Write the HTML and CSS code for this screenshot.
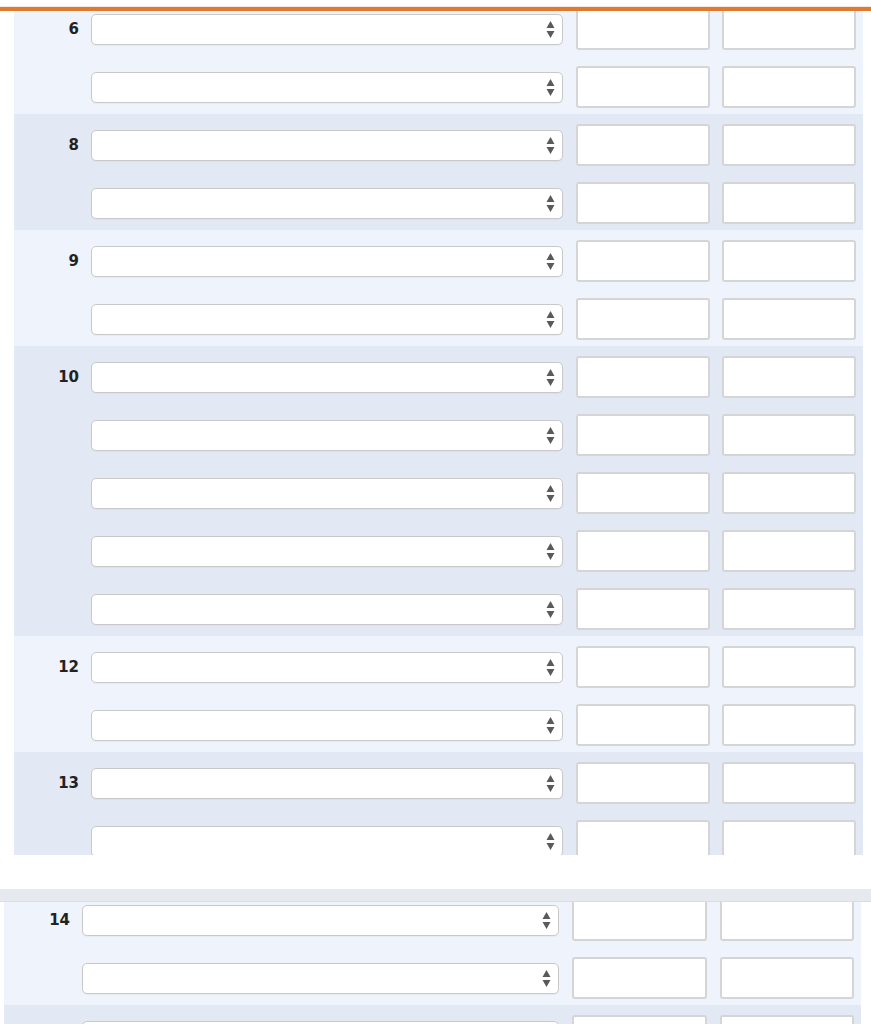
FILE: index.html
```html
<!DOCTYPE html>
<html>
<head>
<meta charset="utf-8">
<link rel="stylesheet" href="styles.css">
</head>
<body>
<div class="top"></div>
<div class="orange"></div>

<div class="pane pane-a">
  <div class="table">
    <div class="group light">
      <div class="row"><div class="num">6</div><div class="sel"><svg class="arr" viewBox="0 0 9 17"><path d="M0.5 7L4.5 0L8.5 7Z M0.5 10L8.5 10L4.5 17Z"/></svg></div><div class="inp"></div><div class="inp"></div></div>
      <div class="row"><div class="num"></div><div class="sel"><svg class="arr" viewBox="0 0 9 17"><path d="M0.5 7L4.5 0L8.5 7Z M0.5 10L8.5 10L4.5 17Z"/></svg></div><div class="inp"></div><div class="inp"></div></div>
    </div>
    <div class="group dark">
      <div class="row"><div class="num">8</div><div class="sel"><svg class="arr" viewBox="0 0 9 17"><path d="M0.5 7L4.5 0L8.5 7Z M0.5 10L8.5 10L4.5 17Z"/></svg></div><div class="inp"></div><div class="inp"></div></div>
      <div class="row"><div class="num"></div><div class="sel"><svg class="arr" viewBox="0 0 9 17"><path d="M0.5 7L4.5 0L8.5 7Z M0.5 10L8.5 10L4.5 17Z"/></svg></div><div class="inp"></div><div class="inp"></div></div>
    </div>
    <div class="group light">
      <div class="row"><div class="num">9</div><div class="sel"><svg class="arr" viewBox="0 0 9 17"><path d="M0.5 7L4.5 0L8.5 7Z M0.5 10L8.5 10L4.5 17Z"/></svg></div><div class="inp"></div><div class="inp"></div></div>
      <div class="row"><div class="num"></div><div class="sel"><svg class="arr" viewBox="0 0 9 17"><path d="M0.5 7L4.5 0L8.5 7Z M0.5 10L8.5 10L4.5 17Z"/></svg></div><div class="inp"></div><div class="inp"></div></div>
    </div>
    <div class="group dark">
      <div class="row"><div class="num">10</div><div class="sel"><svg class="arr" viewBox="0 0 9 17"><path d="M0.5 7L4.5 0L8.5 7Z M0.5 10L8.5 10L4.5 17Z"/></svg></div><div class="inp"></div><div class="inp"></div></div>
      <div class="row"><div class="num"></div><div class="sel"><svg class="arr" viewBox="0 0 9 17"><path d="M0.5 7L4.5 0L8.5 7Z M0.5 10L8.5 10L4.5 17Z"/></svg></div><div class="inp"></div><div class="inp"></div></div>
      <div class="row"><div class="num"></div><div class="sel"><svg class="arr" viewBox="0 0 9 17"><path d="M0.5 7L4.5 0L8.5 7Z M0.5 10L8.5 10L4.5 17Z"/></svg></div><div class="inp"></div><div class="inp"></div></div>
      <div class="row"><div class="num"></div><div class="sel"><svg class="arr" viewBox="0 0 9 17"><path d="M0.5 7L4.5 0L8.5 7Z M0.5 10L8.5 10L4.5 17Z"/></svg></div><div class="inp"></div><div class="inp"></div></div>
      <div class="row"><div class="num"></div><div class="sel"><svg class="arr" viewBox="0 0 9 17"><path d="M0.5 7L4.5 0L8.5 7Z M0.5 10L8.5 10L4.5 17Z"/></svg></div><div class="inp"></div><div class="inp"></div></div>
    </div>
    <div class="group light">
      <div class="row"><div class="num">12</div><div class="sel"><svg class="arr" viewBox="0 0 9 17"><path d="M0.5 7L4.5 0L8.5 7Z M0.5 10L8.5 10L4.5 17Z"/></svg></div><div class="inp"></div><div class="inp"></div></div>
      <div class="row"><div class="num"></div><div class="sel"><svg class="arr" viewBox="0 0 9 17"><path d="M0.5 7L4.5 0L8.5 7Z M0.5 10L8.5 10L4.5 17Z"/></svg></div><div class="inp"></div><div class="inp"></div></div>
    </div>
    <div class="group dark">
      <div class="row"><div class="num">13</div><div class="sel"><svg class="arr" viewBox="0 0 9 17"><path d="M0.5 7L4.5 0L8.5 7Z M0.5 10L8.5 10L4.5 17Z"/></svg></div><div class="inp"></div><div class="inp"></div></div>
      <div class="row"><div class="num"></div><div class="sel"><svg class="arr" viewBox="0 0 9 17"><path d="M0.5 7L4.5 0L8.5 7Z M0.5 10L8.5 10L4.5 17Z"/></svg></div><div class="inp"></div><div class="inp"></div></div>
    </div>
  </div>
</div>

<div class="gap"></div>
<div class="bar"></div>

<div class="pane pane-b">
  <div class="table">
    <div class="group light">
      <div class="row"><div class="num">14</div><div class="sel"><svg class="arr" viewBox="0 0 9 17"><path d="M0.5 7L4.5 0L8.5 7Z M0.5 10L8.5 10L4.5 17Z"/></svg></div><div class="inp"></div><div class="inp"></div></div>
      <div class="row"><div class="num"></div><div class="sel"><svg class="arr" viewBox="0 0 9 17"><path d="M0.5 7L4.5 0L8.5 7Z M0.5 10L8.5 10L4.5 17Z"/></svg></div><div class="inp"></div><div class="inp"></div></div>
    </div>
    <div class="group dark">
      <div class="row"><div class="num"></div><div class="sel"><svg class="arr" viewBox="0 0 9 17"><path d="M0.5 7L4.5 0L8.5 7Z M0.5 10L8.5 10L4.5 17Z"/></svg></div><div class="inp"></div><div class="inp"></div></div>
    </div>
  </div>
</div>
</body>
</html>
```

FILE: styles.css
```css
html, body {
  margin: 0;
  padding: 0;
  background: #ffffff;
  overflow: hidden;
}
body {
  width: 871px;
  height: 1024px;
  font-family: "DejaVu Sans", "Liberation Sans", sans-serif;
}
.top {
  height: 6px;
  background: #ffffff;
  border-bottom: 1px solid #f3e6dc;
}
.orange {
  height: 4px;
  background: #e07a30;
}
.pane {
  overflow: hidden;
}
.pane-a {
  height: 844px;
  margin-left: 14px;
  width: 849px;
}
.pane-b {
  height: 122px;
  margin-left: 4px;
  width: 857px;
}
.table {
  margin-top: -13px;
}
.gap {
  height: 34px;
}
.bar {
  height: 12px;
  background: #e6e9ee;
  border-bottom: 1px solid #d9dde3;
}
.group.light { background: #eef3fc; }
.group.dark { background: #e2e9f5; }

.row {
  display: grid;
  align-items: center;
  height: 42px;
  padding: 10px 0 6px;
}
.pane-a .row {
  grid-template-columns: 65px 473px 134px 134px;
  column-gap: 12px;
  padding-right: 6px;
}
.pane-a .row .sel { margin-right: 1px; }
.pane-b .row {
  grid-template-columns: 66px 478px 135px 135px;
  column-gap: 12px;
  padding-right: 5px;
}
.pane-b .row .sel { margin-right: 1px; }
.pane-b .row .inp + .inp { margin-left: 1px; }

.num {
  text-align: right;
  font-weight: bold;
  font-size: 15px;
  color: #222222;
  line-height: 18px;
}
.sel {
  box-sizing: border-box;
  height: 31px;
  background: #ffffff;
  border: 1px solid #c9c9c9;
  border-radius: 5px;
  box-shadow: 0 1px 1px rgba(0,0,0,0.04);
  display: flex;
  align-items: center;
  justify-content: flex-end;
  padding-right: 7px;
}
.arr {
  width: 9px;
  height: 17px;
  fill: #5a5a5a;
  display: block;
}
.inp {
  box-sizing: border-box;
  height: 42px;
  background: #ffffff;
  border: 2px solid #d5d5d5;
  border-radius: 3px;
}
```
